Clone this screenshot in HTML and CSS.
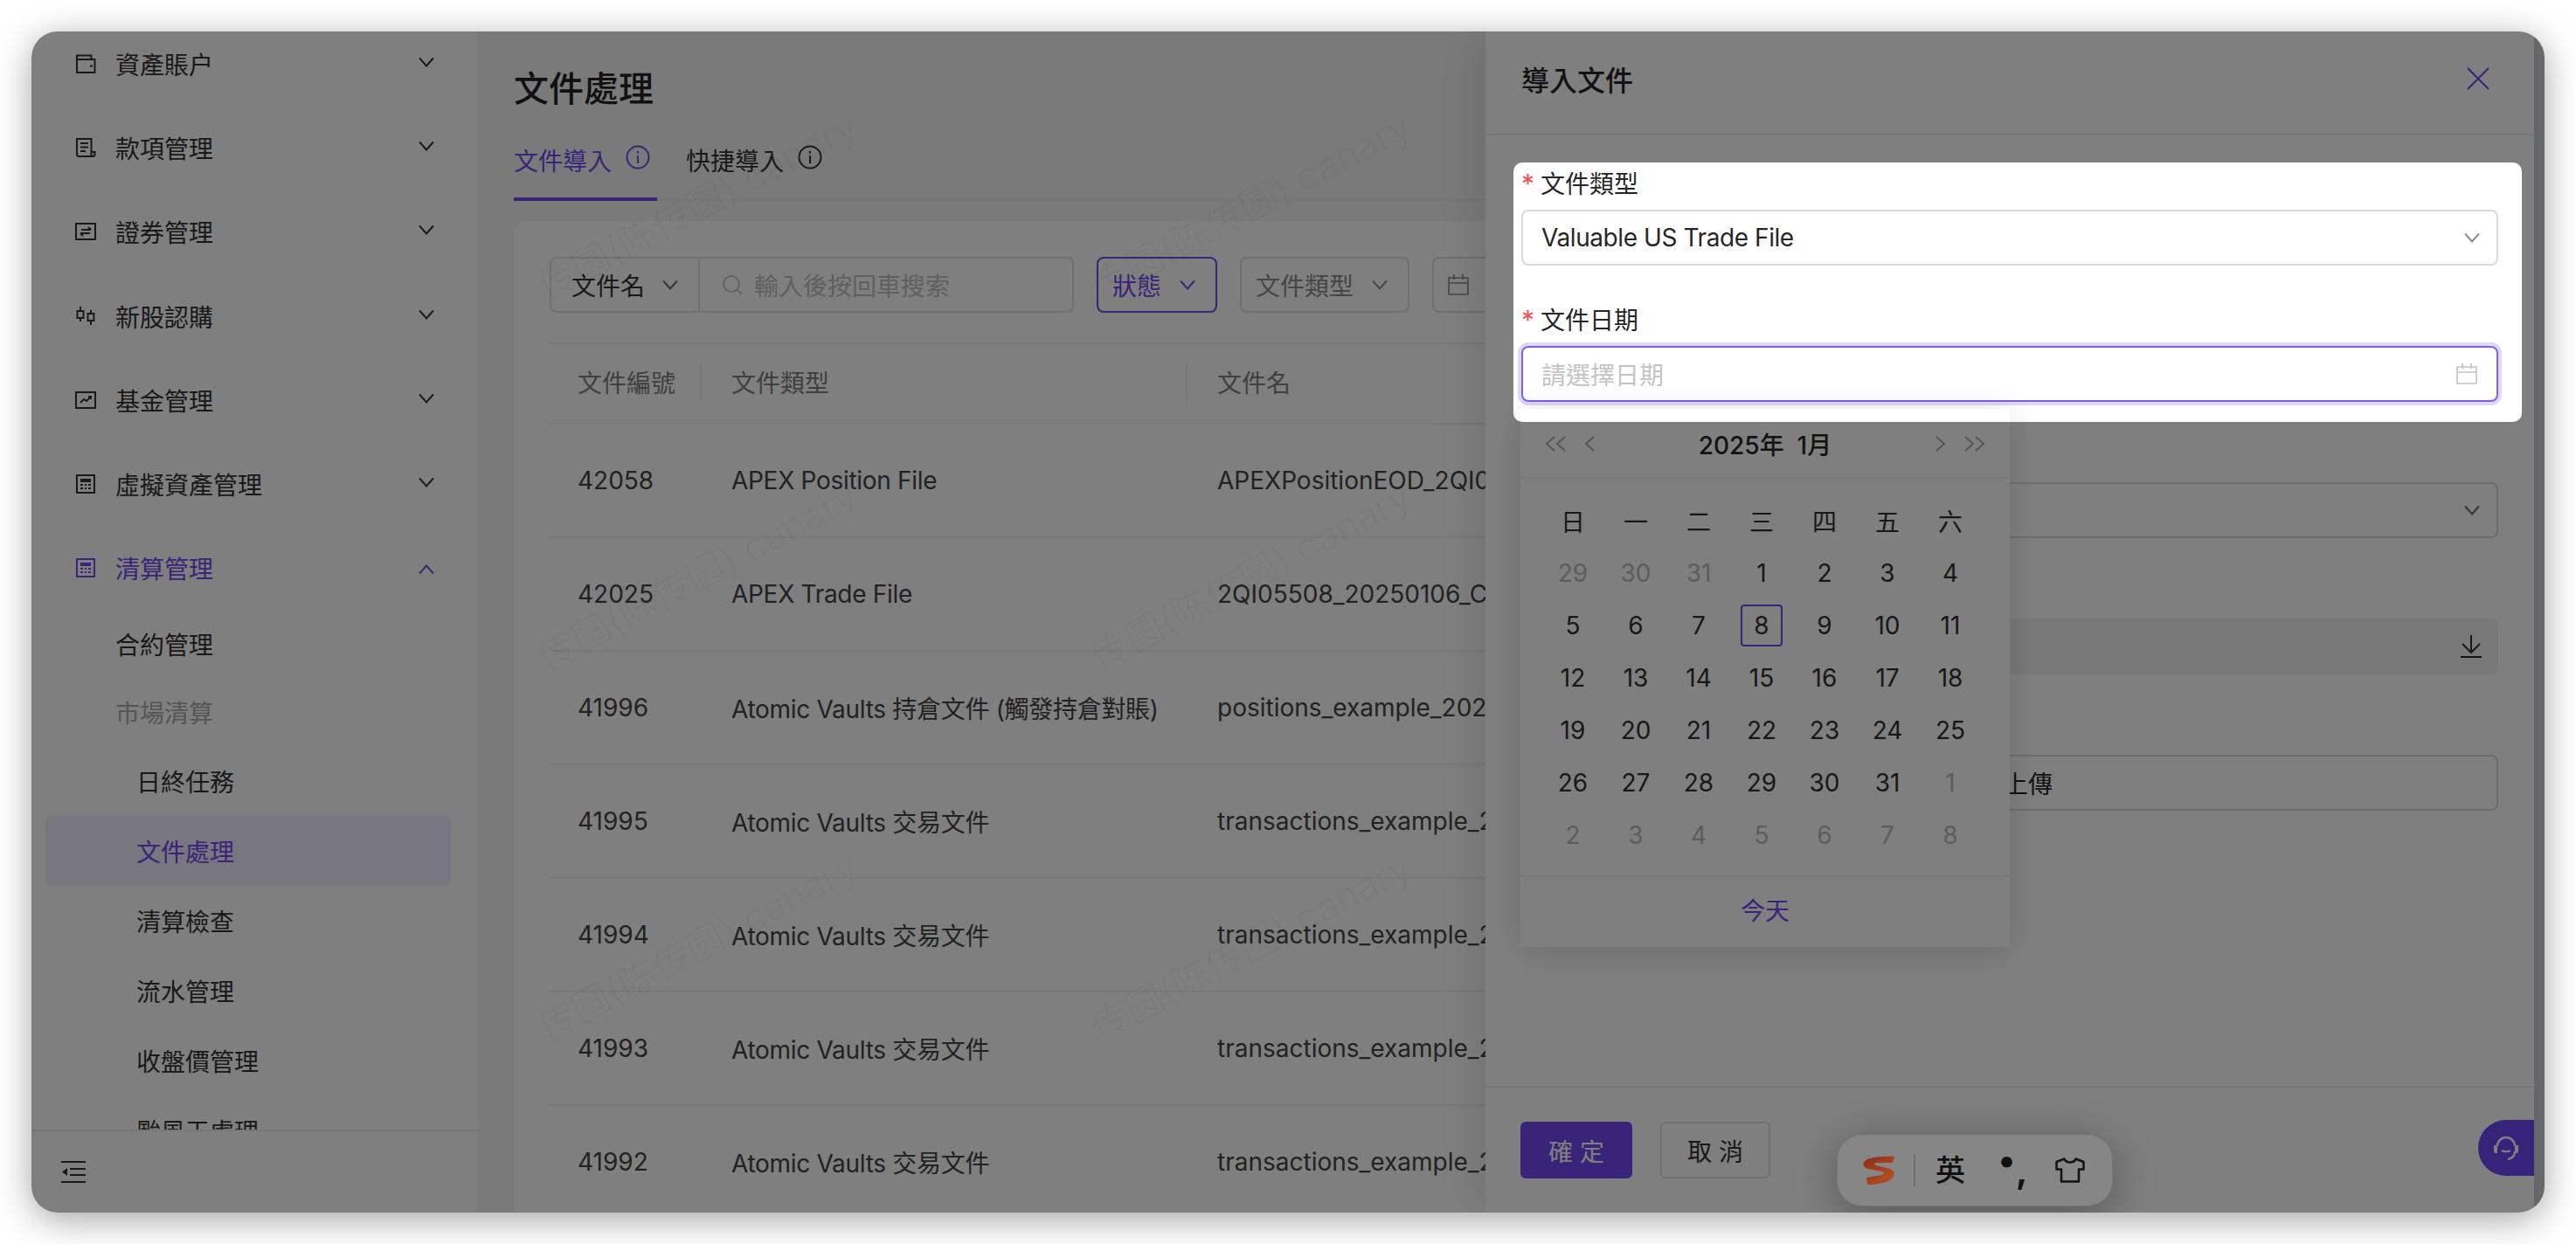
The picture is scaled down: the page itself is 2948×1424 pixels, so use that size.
FILE: index.html
```html
<!DOCTYPE html>
<html lang="zh-Hant">
<head>
  <meta charset="UTF-8">
  <title>文件處理</title>
  <link rel="stylesheet" href="styles.css">
</head>
<body>
  <svg class="defs" width="0" height="0">
    <symbol id="chev" viewBox="0 0 16 16"><path d="M1 4l7 8 7-8" fill="none" stroke="currentColor" stroke-width="1.7"/></symbol>
    <symbol id="cal" viewBox="0 0 24 24"><path d="M1 4h22v19H1zM1 10h22M7 0v6M17 0v6" fill="none" stroke="currentColor" stroke-width="1.6"/></symbol>
    <symbol id="info" viewBox="0 0 28 28"><circle cx="14" cy="14" r="12.5" fill="none" stroke="currentColor" stroke-width="2"/><path d="M14 12v9M14 7v2.4" stroke="currentColor" stroke-width="2"/></symbol>
    <linearGradient id="imeGrad" x1="0" y1="0" x2="1" y2="1"><stop offset="0" stop-color="#8c2e14"/><stop offset="1" stop-color="#b85423"/></linearGradient>
  </svg>

  <div class="window">
    <aside class="sidebar">
      <div class="menu-scroll">
        <ul class="menu">
          <li class="menu-row">
            <svg class="menu-icon" viewBox="0 0 24 24"><path d="M2 7V2.500h16.500V7M2 7h20.500v15H2zM17 14.500h3" fill="none" stroke="currentColor" stroke-width="2"/></svg>
            <span>資產賬户</span>
            <svg class="menu-chev"><use href="#chev"/></svg>
          </li>
          <li class="menu-row">
            <svg class="menu-icon" viewBox="0 0 24 24"><path d="M18.500 22H3.500L2 20.500V2h16.500v20h2.500l1.500-1.500V17h-4M6 7h9M6 11.500h9M6 16h6" fill="none" stroke="currentColor" stroke-width="2"/></svg>
            <span>款項管理</span>
            <svg class="menu-chev"><use href="#chev"/></svg>
          </li>
          <li class="menu-row">
            <svg class="menu-icon" viewBox="0 0 24 24"><path d="M1 3h22v18H1zM7 10h11M15 7l3 3M17 14H6M9 17l-3-3" fill="none" stroke="currentColor" stroke-width="2"/></svg>
            <span>證券管理</span>
            <svg class="menu-chev"><use href="#chev"/></svg>
          </li>
          <li class="menu-row">
            <svg class="menu-icon" viewBox="0 0 24 24"><path d="M6 1v5M6 14v4M18 5v4M18 17v5M2.500 6h7v8h-7zM14.500 9h7v8h-7z" fill="none" stroke="currentColor" stroke-width="2"/></svg>
            <span>新股認購</span>
            <svg class="menu-chev"><use href="#chev"/></svg>
          </li>
          <li class="menu-row">
            <svg class="menu-icon" viewBox="0 0 24 24"><path d="M1 3h22v18H1zM6 15l4-4 3 2 5-5M15 8h3v3" fill="none" stroke="currentColor" stroke-width="2"/></svg>
            <span>基金管理</span>
            <svg class="menu-chev"><use href="#chev"/></svg>
          </li>
          <li class="menu-row">
            <svg class="menu-icon" viewBox="0 0 24 24"><path d="M2 2h20v20H2z" fill="none" stroke="currentColor" stroke-width="2"/><path d="M6 6h12v4H6zM6 12h3v2H6zM11 12h2v2h-2zM15 12h3v2h-3zM6 16h3v2H6zM11 16h2v2h-2zM15 16h3v2h-3z" fill="currentColor"/></svg>
            <span>虛擬資產管理</span>
            <svg class="menu-chev"><use href="#chev"/></svg>
          </li>
          <li class="menu-row active">
            <svg class="menu-icon" viewBox="0 0 24 24"><path d="M2 2h20v20H2z" fill="none" stroke="currentColor" stroke-width="2"/><path d="M6 6h12v4H6zM6 12h3v2H6zM11 12h2v2h-2zM15 12h3v2h-3zM6 16h3v2H6zM11 16h2v2h-2zM15 16h3v2h-3z" fill="currentColor"/></svg>
            <span>清算管理</span>
            <svg class="menu-chev flip"><use href="#chev"/></svg>
          </li>
          <li class="sub-row">合約管理</li>
          <li class="sub-row muted">市場清算</li>
          <li class="leaf-row">日終任務</li>
          <li class="leaf-row selected">文件處理</li>
          <li class="leaf-row">清算檢查</li>
          <li class="leaf-row">流水管理</li>
          <li class="leaf-row">收盤價管理</li>
          <li class="leaf-row">颱風天處理</li>
        </ul>
      </div>
      <div class="side-foot">
        <svg class="collapse" viewBox="0 0 28 25"><path d="M0 1h28M10 9h18M10 16h18M0 24h28" fill="none" stroke="currentColor" stroke-width="2"/><path d="M1 12.500L7 8v9z" fill="currentColor"/></svg>
      </div>
    </aside>

    <main class="main">
      <h1 class="page-title">文件處理</h1>
      <div class="tabs">
        <div class="tab current">文件導入<svg class="tab-info"><use href="#info"/></svg></div>
        <div class="tab">快捷導入<svg class="tab-info"><use href="#info"/></svg></div>
      </div>

      <section class="card">
        <div class="toolbar">
          <div class="search-group">
            <div class="search-field">文件名<svg class="chev"><use href="#chev"/></svg></div>
            <div class="search-input">
              <svg class="search-icon" viewBox="0 0 24 24"><circle cx="11" cy="11" r="9" fill="none" stroke="currentColor" stroke-width="1.700"/><path d="M17.500 17.500L23 23" stroke="currentColor" stroke-width="1.700"/></svg>
              輸入後按回車搜索
            </div>
          </div>
          <div class="filter on">狀態<svg class="chev"><use href="#chev"/></svg></div>
          <div class="filter">文件類型<svg class="chev"><use href="#chev"/></svg></div>
          <div class="filter date"><svg class="cal-icon"><use href="#cal"/></svg></div>
        </div>

        <table class="files">
          <thead>
            <tr><th><span>文件編號</span></th><th><span>文件類型</span></th><th><span>文件名</span></th></tr>
          </thead>
          <tbody>
            <tr><td>42058</td><td>APEX Position File</td><td>APEXPositionEOD_2QI05</td></tr>
            <tr><td>42025</td><td>APEX Trade File</td><td>2QI05508_20250106_C</td></tr>
            <tr><td>41996</td><td>Atomic Vaults 持倉文件 (觸發持倉對賬)</td><td>positions_example_2025</td></tr>
            <tr><td>41995</td><td>Atomic Vaults 交易文件</td><td>transactions_example_20</td></tr>
            <tr><td>41994</td><td>Atomic Vaults 交易文件</td><td>transactions_example_20</td></tr>
            <tr><td>41993</td><td>Atomic Vaults 交易文件</td><td>transactions_example_20</td></tr>
            <tr><td>41992</td><td>Atomic Vaults 交易文件</td><td>transactions_example_20</td></tr>
          </tbody>
        </table>
      </section>

      <div class="watermarks">
        <span>传圆(陈传圆) canary</span><span>传圆(陈传圆) canary</span>
        <span>传圆(陈传圆) canary</span><span>传圆(陈传圆) canary</span>
        <span>传圆(陈传圆) canary</span><span>传圆(陈传圆) canary</span>
      </div>
    </main>

    <aside class="drawer">
      <header class="drawer-head">
        <h2>導入文件</h2>
        <svg class="drawer-close" viewBox="0 0 24 24"><path d="M1 1l22 22M23 1L1 23" stroke="currentColor" stroke-width="2"/></svg>
      </header>
      <form class="drawer-form">
        <div class="field">
          <label><i>*</i>文件類型</label>
          <div class="control latin">Valuable US Trade File<svg class="chev end"><use href="#chev"/></svg></div>
        </div>
        <div class="field">
          <label><i>*</i>文件日期</label>
          <div class="control focused">請選擇日期<svg class="cal-icon end"><use href="#cal"/></svg></div>
        </div>
        <div class="field">
          <label></label>
          <div class="control"><svg class="chev end dark"><use href="#chev"/></svg></div>
        </div>
        <div class="field">
          <label></label>
          <div class="control filled">
            <svg class="download end" viewBox="0 0 24 26"><path d="M12 0v19M2 10l10 10 10-10M0 25h24" fill="none" stroke="currentColor" stroke-width="2"/></svg>
          </div>
        </div>
        <div class="field">
          <label></label>
          <div class="control upload">點擊上傳</div>
        </div>
      </form>
      <footer class="drawer-foot">
        <div class="btn primary">確 定</div>
        <div class="btn">取 消</div>
      </footer>
      <div class="chat">
        <svg viewBox="0 0 30 30"><path d="M5 13a10 10 0 0 1 20 0M25 19c0 5-3 8-8 9" fill="none" stroke="currentColor" stroke-width="2.500"/><path d="M1 12h4v9H3c-1 0-2-1-2-2zM29 12h-4v9h2c1 0 2-1 2-2z" fill="currentColor"/><path d="M10 18c2 1.500 8 1.500 10 0" fill="none" stroke="currentColor" stroke-width="2.200"/></svg>
      </div>
    </aside>

    <div class="calendar">
      <div class="cal-head">
        <div class="cal-nav">
          <svg class="nav-double" viewBox="0 0 24 18"><path d="M11 1L2 9l9 8M23 1l-9 8 9 8" fill="none" stroke="currentColor" stroke-width="2"/></svg>
          <svg class="nav-single" viewBox="0 0 12 18"><path d="M11 1L2 9l9 8" fill="none" stroke="currentColor" stroke-width="2"/></svg>
        </div>
        <div class="cal-title">2025年&nbsp;&nbsp;1月</div>
        <div class="cal-nav">
          <svg class="nav-single" viewBox="0 0 12 18"><path d="M1 1l9 8-9 8" fill="none" stroke="currentColor" stroke-width="2"/></svg>
          <svg class="nav-double" viewBox="0 0 24 18"><path d="M1 1l9 8-9 8M13 1l9 8-9 8" fill="none" stroke="currentColor" stroke-width="2"/></svg>
        </div>
      </div>
      <div class="cal-grid">
        <span>日</span><span>一</span><span>二</span><span>三</span><span>四</span><span>五</span><span>六</span>
        <span class="off">29</span><span class="off">30</span><span class="off">31</span><span>1</span><span>2</span><span>3</span><span>4</span>
        <span>5</span><span>6</span><span>7</span><span><b class="today">8</b></span><span>9</span><span>10</span><span>11</span>
        <span>12</span><span>13</span><span>14</span><span>15</span><span>16</span><span>17</span><span>18</span>
        <span>19</span><span>20</span><span>21</span><span>22</span><span>23</span><span>24</span><span>25</span>
        <span>26</span><span>27</span><span>28</span><span>29</span><span>30</span><span>31</span><span class="off">1</span>
        <span class="off">2</span><span class="off">3</span><span class="off">4</span><span class="off">5</span><span class="off">6</span><span class="off">7</span><span class="off">8</span>
      </div>
      <div class="cal-foot">今天</div>
    </div>

    <div class="spotlight"></div>

    <div class="ime">
      <svg class="ime-logo" viewBox="0 0 36 33"><path d="M36 1C25 0 12 1 5 4c-6 3-6 9 1 11l16 3c3 1 2 3-1 4L4 25l1 8c10 0 21-2 26-5 6-4 6-11 0-13L15 11c-3-1-2-3 1-3h18z" fill="url(#imeGrad)"/></svg>
      <div class="ime-sep"></div>
      <span class="ime-lang">英</span>
      <div class="ime-punct"><span>•</span><span>,</span></div>
      <svg class="ime-skin" viewBox="0 0 34 29"><path d="M10.500 1.500c1 3 3.500 4 6.500 4s5.500-1 6.500-4l9 3.500v8.500H27v14H7v-14H1.500V5z" fill="none" stroke="#111" stroke-width="2.500" stroke-linejoin="round"/></svg>
    </div>
  </div>
</body>
</html>
```

FILE: styles.css
```css
* { box-sizing: border-box; }
html, body { margin: 0; height: 100%; background: #fff; overflow: hidden; }
body { padding: 36px; font-family: Inter, "Noto Sans CJK TC", sans-serif; font-size: 28px; color: #333; }
h1, h2, ul { margin: 0; padding: 0; }
li { list-style: none; }
.defs { position: absolute; }

.window { position: relative; display: flex; width: 2876px; height: 1352px; border-radius: 30px; overflow: hidden; background: #fff; box-shadow: 0 8px 40px rgba(0,0,0,.36); }

/* sidebar */
.sidebar { flex: 0 0 511px; display: flex; flex-direction: column; background: #fff; }
.menu-scroll { flex: 1; overflow: hidden; }
.menu { margin-top: -11px; }
.menu-row { display: flex; align-items: center; height: 96.2px; padding-left: 50px; }
.menu-row span { margin-left: 22px; }
.menu-icon { width: 24px; height: 24px; }
.menu-chev { width: 18px; height: 18px; margin-left: auto; margin-right: 50px; position: relative; top: -2px; }
.menu-chev.flip { transform: rotate(180deg); top: 2px; }
.menu-row.active { color: #7248f2; }
.sub-row { display: flex; align-items: center; height: 78px; padding-left: 96px; }
.sub-row.muted { color: #aaa; }
.leaf-row { display: flex; align-items: center; height: 80px; margin: 0 31px 0 16px; padding-left: 104px; border-radius: 8px; }
.leaf-row.selected { background: #f1edfd; color: #7248f2; }
.side-foot { flex: 0 0 95px; display: flex; align-items: center; padding-left: 34px; border-top: 2px solid #eee; }
.collapse { width: 28px; height: 25px; }

/* main */
.main { position: relative; flex: 1; overflow: hidden; padding: 38px 0 0 41px; background: #f5f5f5; }
.page-title { font-size: 40px; line-height: 56px; font-weight: 500; color: #222; }
.tabs { display: flex; height: 94px; margin-top: 6px; border-bottom: 2px solid #e8e8e8; }
.tab { display: flex; align-items: center; height: 94px; margin-right: 33px; padding-right: 8px; }
.tab.current { color: #7248f2; border-bottom: 4px solid #7248f2; padding-top: 4px; }
.tab-info { width: 28px; height: 28px; margin-left: 16px; position: relative; top: -3px; }
.card { width: 2200px; margin-top: 23px; padding: 41px 0 0 41px; background: #fff; border-radius: 14px; }

.toolbar { display: flex; gap: 26px; height: 64px; }
.search-group { display: flex; width: 600px; border: 2px solid #e0e0e0; border-radius: 8px; }
.search-field { display: flex; align-items: center; width: 170px; padding-left: 23px; border-right: 2px solid #e0e0e0; }
.search-field .chev { margin-left: 20px; color: #666; }
.search-input { display: flex; align-items: center; padding-left: 25px; color: #c0c0c0; }
.search-icon { width: 24px; height: 26px; margin-right: 13px; }
.chev { width: 18px; height: 18px; flex: none; }
.filter { display: flex; align-items: center; padding: 0 23px 0 16px; border: 2px solid #e0e0e0; border-radius: 8px; color: #8c8c8c; }
.filter .chev { margin-left: 21px; }
.filter.on { color: #7248f2; border-color: #7248f2; }
.filter.date { flex: 1; }
.cal-icon { width: 24px; height: 24px; flex: none; }

.files { width: 2150px; margin-top: 34px; border-collapse: collapse; table-layout: fixed; border-top: 2px solid #f0f0f0; }
.files th:nth-child(1) { width: 174px; }
.files th:nth-child(2) { width: 556px; }
.files th { height: 92px; padding: 0; text-align: left; font-weight: 400; color: #808080; border-bottom: 2px solid #eee; }
.files th span { display: block; line-height: 44px; padding-left: 32px; border-right: 2px solid #f0f0f0; }
.files th:nth-child(n+2) span { padding-left: 34px; }
.files td { height: 130px; padding: 0 0 0 32px; border-bottom: 2px solid #f0f0f0; white-space: nowrap; color: #444; font-size: 28px; }
.files td:nth-child(n+2) { padding-left: 34px; }
.files td:nth-child(2) { letter-spacing: -.3px; }

.watermarks { position: absolute; left: -67px; top: -15px; display: grid; grid-template-columns: repeat(2, 633px); grid-auto-rows: 424px; pointer-events: none; }
.watermarks span { display: flex; align-items: center; justify-content: center; font-size: 44px; white-space: nowrap; color: rgba(0,0,0,.028); transform: rotate(-28deg); }

/* drawer */
.drawer { position: absolute; top: 0; right: 0; bottom: 0; width: 1212px; display: flex; flex-direction: column; background: #fff; border-right: 12px solid #cfd1d5; box-shadow: -12px 0 48px rgba(0,0,0,.1); }
.drawer-head { display: flex; align-items: center; justify-content: space-between; flex: 0 0 119px; padding: 0 51px 10px 41px; border-bottom: 2px solid #eee; }
.drawer-head h2 { font-size: 32px; font-weight: 500; color: #262626; }
.drawer-close { width: 26px; height: 26px; color: #7248f2; }
.drawer-form { flex: 1; overflow: hidden; padding: 33px 41px 0; }
.field { height: 156px; }
.field label { display: block; height: 44px; margin-bottom: 8px; line-height: 44px; color: #262626; }
.field label i { margin-right: 7px; font-style: normal; font-size: 30px; color: #ff4d4f; }
.control { position: relative; display: flex; align-items: center; height: 64px; padding-left: 21px; border: 2px solid #d9d9d9; border-radius: 8px; color: #262626; }
.control.latin { letter-spacing: -.42px; }
.control .end { position: absolute; right: 19px; color: #8c8c8c; }
.control .end.dark { color: #666; }
.control .cal-icon.end { right: 22px; }
.control.focused { border-color: #7f5ee8; box-shadow: 0 0 0 4px #dfd8f8; color: #c4c4c4; }
.control.focused .end { color: #c4c4c4; }
.control.filled { border: 0; background: #f1f3f1; }
.control.filled .end { right: 19px; color: #333; }
.control.upload { justify-content: center; padding: 0 14px 0 0; }
.download { width: 24px; height: 26px; }
.drawer-foot { display: flex; gap: 32px; flex: 0 0 145px; padding: 39px 0 0 40px; border-top: 2px solid #eee; }
.btn { display: flex; align-items: center; justify-content: center; width: 126px; height: 65px; border: 2px solid #e0e0e0; border-radius: 6px; color: #333; }
.btn.primary { width: 128px; background: #7248f2; border-color: #7248f2; color: #fff; }
.chat { position: absolute; right: 0; top: 1246px; display: flex; align-items: center; justify-content: center; width: 64px; height: 64px; border-radius: 32px 0 0 32px; background: #7046f4; color: #fff; }
.chat svg { width: 30px; height: 30px; }

/* calendar popup */
.calendar { position: absolute; left: 1704px; top: 432px; width: 560px; height: 616px; background: #fff; box-shadow: 0 6px 36px rgba(0,0,0,.14); }
.cal-head { display: flex; align-items: center; justify-content: space-between; height: 80px; padding: 2px 28px 0; border-bottom: 2px solid #f0f0f0; color: #aaa; }
.cal-nav { display: flex; align-items: center; gap: 21px; }
.nav-double { width: 24px; height: 18px; }
.nav-single { width: 12px; height: 18px; }
.cal-title { font-weight: 500; color: #262626; }
.cal-grid { display: grid; grid-template-columns: repeat(7, 72px); grid-auto-rows: 60px; padding: 18px 0 16px 24px; }
.cal-grid span { display: flex; align-items: center; justify-content: center; color: #303030; }
.cal-grid span.off { color: #bbb; }
.today { display: flex; align-items: center; justify-content: center; width: 48px; height: 48px; font-weight: 400; border: 2px solid #7248f2; border-radius: 4px; }
.cal-foot { height: 80px; line-height: 78px; text-align: center; color: #7248f2; border-top: 2px solid #f0f0f0; }

/* cut-out over the dimmed page */
.spotlight { position: absolute; left: 1696px; top: 150px; width: 1154px; height: 297px; border-radius: 10px; box-shadow: 0 0 0 4000px rgba(0,0,0,.5); }

/* input method bar */
.ime { position: absolute; left: 2067px; top: 1263px; display: flex; align-items: center; width: 314px; height: 81px; padding: 0 31px 0 29px; border-radius: 28px; background: #868686; box-shadow: 0 0 0 1px #767676, 0 10px 50px rgba(0,0,0,.32); color: #111; }
.ime-logo { width: 36px; height: 33px; }
.ime-sep { width: 2px; height: 36px; margin: 0 23px 0 22px; background: #6f6f6f; }
.ime-lang { font-size: 34px; font-weight: 500; line-height: 1; }
.ime-punct { display: flex; margin-left: 38px; font-size: 40px; line-height: 1; font-weight: 700; }
.ime-punct span:first-child { position: relative; top: -12px; }
.ime-punct span:last-child { position: relative; top: 0; margin-left: 1px; }
.ime-skin { width: 34px; height: 29px; margin-left: auto; }
```
